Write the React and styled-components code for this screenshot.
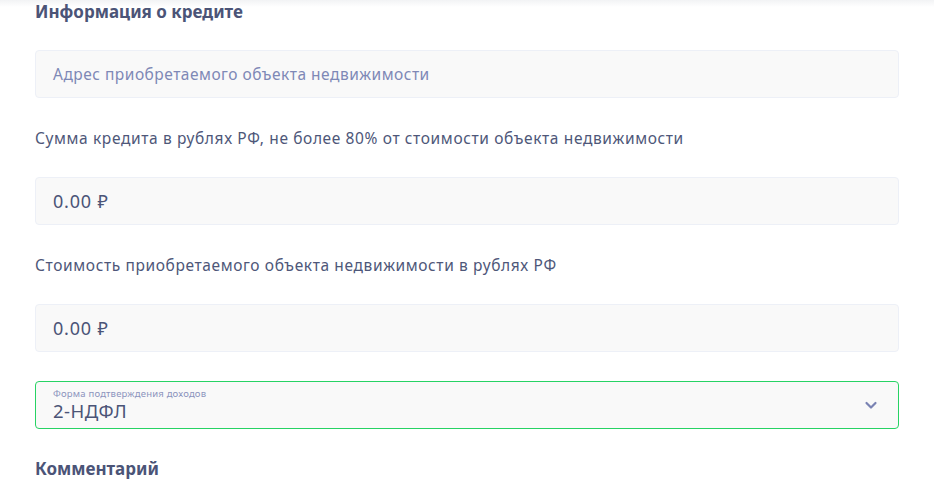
import React from 'react';
import styled, { createGlobalStyle } from 'styled-components';

const GlobalStyle = createGlobalStyle`
  body {
    margin: 0;
    background: #ffffff;
    font-family: 'Noto Sans', 'Open Sans', sans-serif;
  }
`

const Page = styled.div`
  width: 934px;
  height: 489px;
  overflow: hidden;
  position: relative;
  background: linear-gradient(to bottom, #f2f3f5 0px, #ffffff 7px);
`

const Form = styled.div`
  display: flex;
  flex-direction: column;
  padding: 0 35px;
  margin-top: -2px;
`

const SectionTitle = styled.h2`
  margin: 0;
  font-size: 17px;
  font-weight: 700;
  line-height: 28px;
  color: #4b5477;
  margin-top: ${p => p.top || 0}px;
  margin-bottom: ${p => p.gap || 0}px;
`

const FieldLabel = styled.div`
  font-size: 15.5px;
  line-height: 22px;
  letter-spacing: 0.62px;
  color: #4e5779;
  margin: 29px 0 28px;
`

const Field = styled.div`
  height: 48px;
  box-sizing: border-box;
  display: flex;
  align-items: center;
  padding: 0 17px;
  background: #f9f9f9;
  border: 1px solid ${p => (p.active ? '#27d364' : '#edf0f7')};
  border-radius: 4px;
  color: ${p => (p.placeholder ? '#7e88b6' : '#4b5477')};
  font-size: ${p => (p.placeholder ? '15.5px' : '18px')};
  letter-spacing: ${p => (p.placeholder ? '0.5px' : '0.8px')};
`

const Select = styled(Field)`
  margin-top: 29px;
  justify-content: space-between;
  padding-right: 20px;
  letter-spacing: 0;
`

const SelectText = styled.div`
  display: flex;
  flex-direction: column;
  padding-bottom: 1px;
`

const SelectLabel = styled.span`
  font-size: 9.5px;
  line-height: 12px;
  letter-spacing: 0.2px;
  color: #8c94bd;
`

const SelectValue = styled.span`
  font-size: 18.5px;
  line-height: 22px;
  letter-spacing: 0.5px;
  color: #4b5477;
`

const Chevron = () => (
  <svg width="14" height="14" viewBox="0 0 14 14" fill="none">
    <path d="M2.5 5l4.5 4.5L11.5 5" stroke="#7a83b3" strokeWidth="2.2" strokeLinecap="round" strokeLinejoin="round" />
  </svg>
)

export default function App() {
  return (
    <Page>
      <GlobalStyle />
      <Form>
        <SectionTitle gap={24}>Информация о кредите</SectionTitle>
        <Field placeholder>Адрес приобретаемого объекта недвижимости</Field>
        <FieldLabel>Сумма кредита в рублях РФ, не более 80% от стоимости объекта недвижимости</FieldLabel>
        <Field>0.00 ₽</Field>
        <FieldLabel>Стоимость приобретаемого объекта недвижимости в рублях РФ</FieldLabel>
        <Field>0.00 ₽</Field>
        <Select active>
          <SelectText>
            <SelectLabel>Форма подтверждения доходов</SelectLabel>
            <SelectValue>2-НДФЛ</SelectValue>
          </SelectText>
          <Chevron />
        </Select>
        <SectionTitle top={26}>Комментарий</SectionTitle>
      </Form>
    </Page>
  );
}
